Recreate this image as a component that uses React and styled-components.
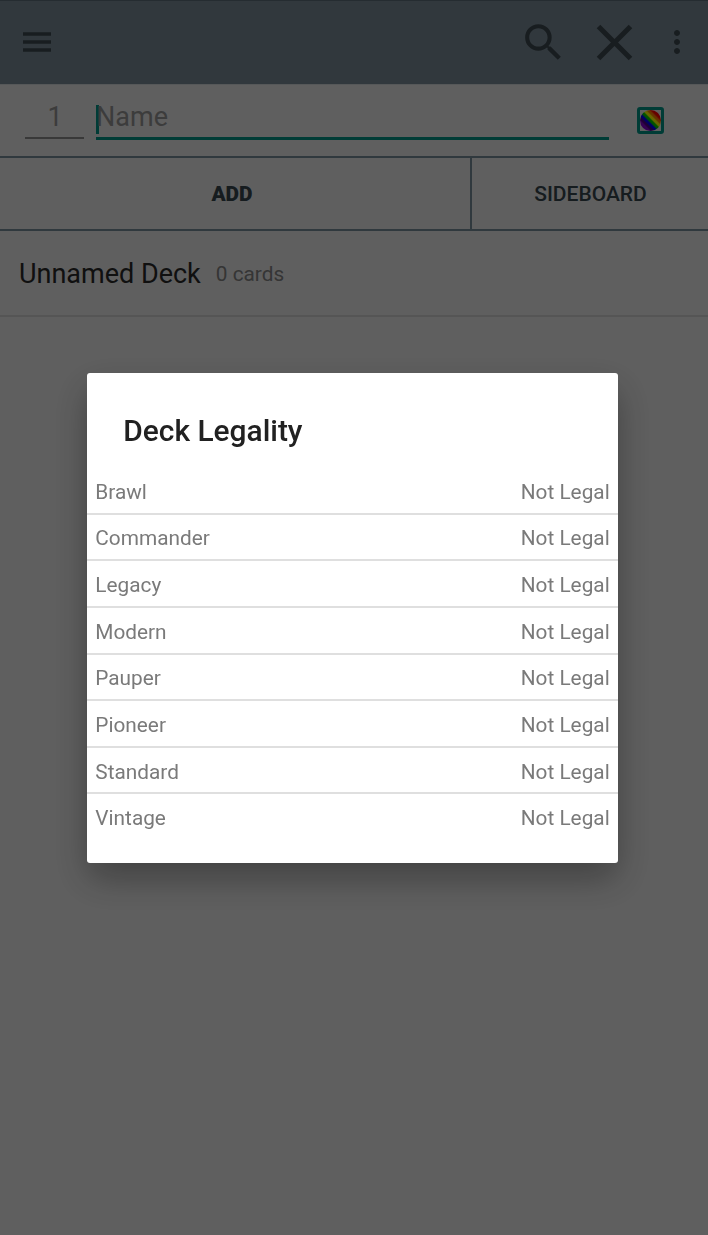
import React from "react";
import styled, { createGlobalStyle } from "styled-components";
import { MdClose, MdMoreVert, MdSearch } from "react-icons/md";

const GlobalStyle = createGlobalStyle`
  * { box-sizing: border-box; }
  body {
    margin: 0;
    background: #eeeeee;
    font-family: Roboto, "Liberation Sans", sans-serif;
    color: #2a2a2a;
  }
`;

const Screen = styled.main`
  position: relative;
  min-height: 100vh;
  background: #eeeeee;
`;

const Toolbar = styled.header`
  display: flex;
  align-items: center;
  height: 84px;
  padding: 0 13px 1px 23px;
  border-top: 1px solid #5c6f7a;
  background: #7b8c99;
  color: #3e4a50;
`;

const IconButton = styled.button`
  display: flex;
  flex: none;
  align-items: center;
  justify-content: center;
  width: ${(p) => p.$width}px;
  height: 72px;
  padding: 0;
  border: 0;
  background: none;
  color: inherit;
`;

const ToolbarActions = styled.div`
  display: flex;
  align-items: center;
  margin-left: auto;
`;

const OverflowButton = styled(IconButton)`
  margin-left: 9px;
`;

const EntryRow = styled.div`
  display: flex;
  align-items: flex-start;
  height: 72px;
  padding: 14px 44px 0 25px;
  border-top: 1px solid #d8dcde;
`;

const Field = styled.div`
  display: flex;
  justify-content: ${(p) => (p.$centered ? "center" : "flex-start")};
  width: ${(p) => p.$width}px;
  height: ${(p) => (p.$focused ? 41 : 40)}px;
  margin-right: ${(p) => p.$gap}px;
  padding-left: ${(p) => (p.$centered ? 1 : 0)}px;
  border-bottom: ${(p) => (p.$focused ? "3px solid #009688" : "2px solid #909090")};
  color: #979797;
  font-size: 27px;
  line-height: 37px;
`;

const Caret = styled.span`
  width: 3px;
  height: 29px;
  margin: 6px -3px 0 0;
  background: #009688;
`;

const ColorToggle = styled.button`
  width: 27px;
  height: 27px;
  margin-top: 8px;
  padding: 0;
  border: 3px solid #009688;
  border-radius: 3px;
  background: none;
`;

const Rainbow = styled.span`
  display: block;
  width: 21px;
  height: 21px;
  border-radius: 50%;
  background: linear-gradient(
    45deg,
    #8500d0 24%,
    #4b0082 29% 33%,
    #0000ff 37% 42%,
    #00d000 47% 52%,
    #ffff00 57% 62%,
    #ff8000 67% 71%,
    #ff0000 77%
  );
`;

const Actions = styled.div`
  display: flex;
  height: 75px;
  border-top: 2px solid #78909c;
  border-bottom: 2px solid #78909c;
`;

const Action = styled.button`
  flex: ${(p) => (p.$primary ? "0 0 470px" : "1")};
  padding: ${(p) => (p.$primary ? "1px 6px 0 0" : "1px 0 0 1px")};
  border: 0;
  border-left: ${(p) => (p.$primary ? "0" : "2px solid #78909c")};
  background: none;
  color: #37474f;
  font-family: inherit;
  font-size: ${(p) => (p.$primary ? 20.8 : 21)}px;
  font-weight: ${(p) => (p.$primary ? 900 : 500)};
`;

const DeckHeader = styled.div`
  display: flex;
  align-items: flex-start;
  gap: 15px;
  height: 86px;
  padding: 26px 19px 0;
  border-bottom: 2px solid #d5d5d5;
`;

const DeckName = styled.span`
  font-size: 27px;
  line-height: 34px;
`;

const DeckCount = styled.span`
  color: #858585;
  font-size: 20.8px;
  line-height: 34px;
`;

const Scrim = styled.div`
  position: fixed;
  inset: 0;
  padding: 373.3px 0 0 87.3px;
  background: rgba(0, 0, 0, 0.6);
`;

const Dialog = styled.section`
  width: 530.4px;
  height: 489.9px;
  padding-top: 38.8px;
  border-radius: 3px;
  background: #ffffff;
  box-shadow: 0 16px 36px rgba(0, 0, 0, 0.32);
`;

const DialogTitle = styled.h2`
  margin: 0 36px 17.8px;
  color: #212121;
  font-size: 29.9px;
  font-weight: 500;
  line-height: 38px;
`;

const FormatRow = styled.div`
  display: flex;
  justify-content: space-between;
  height: 46.67px;
  padding: 10.7px 8px 0;
  border-bottom: 2px solid #dfdfdf;
  color: #7a7a7a;
  font-size: 20.8px;
  line-height: 26px;

  &:last-child {
    border-bottom: 0;
  }
`;

const formats = ["Brawl", "Commander", "Legacy", "Modern", "Pauper", "Pioneer", "Standard", "Vintage"];

export default function App() {
  return (
    <>
      <GlobalStyle />
      <Screen>
        <Toolbar>
          <IconButton $width={28} aria-label="Menu">
            <svg width="28" height="20" viewBox="0 0 28 20" fill="currentColor">
              <path d="M0 .2h28v3.6H0zM0 8.2h28v3.6H0zM0 16.2h28v3.6H0z" />
            </svg>
          </IconButton>
          <ToolbarActions>
            <IconButton $width={69} aria-label="Search"><MdSearch size={49} /></IconButton>
            <IconButton $width={72} aria-label="Close"><MdClose size={61} /></IconButton>
            <OverflowButton $width={36} aria-label="More options"><MdMoreVert size={36} /></OverflowButton>
          </ToolbarActions>
        </Toolbar>
        <EntryRow>
          <Field $width={59} $gap={12} $centered>1</Field>
          <Field $width={513} $gap={28} $focused><Caret />Name</Field>
          <ColorToggle aria-label="Colors"><Rainbow /></ColorToggle>
        </EntryRow>
        <Actions>
          <Action $primary>ADD</Action>
          <Action>SIDEBOARD</Action>
        </Actions>
        <DeckHeader>
          <DeckName>Unnamed Deck</DeckName>
          <DeckCount>0 cards</DeckCount>
        </DeckHeader>
      </Screen>
      <Scrim>
        <Dialog role="dialog" aria-label="Deck Legality">
          <DialogTitle>Deck Legality</DialogTitle>
          <div>
            {formats.map((format) => (
              <FormatRow key={format}>
                <span>{format}</span>
                <span>Not Legal</span>
              </FormatRow>
            ))}
          </div>
        </Dialog>
      </Scrim>
    </>
  );
}
